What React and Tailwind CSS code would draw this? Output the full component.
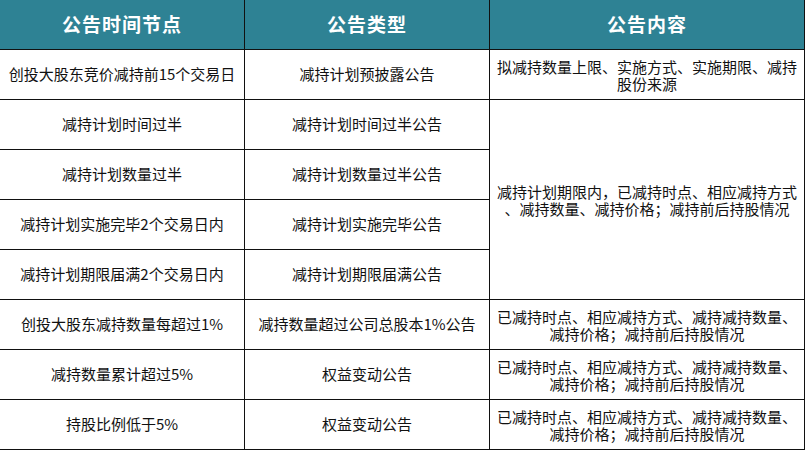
import React from "react";

const rows = [
    ["创投大股东竞价减持前15个交易日", "减持计划预披露公告", ["拟减持数量上限、实施方式、实施期限、减持", "股份来源"]],
    ["减持计划时间过半", "减持计划时间过半公告", null],
    ["减持计划数量过半", "减持计划数量过半公告", null],
    ["减持计划实施完毕2个交易日内", "减持计划实施完毕公告", null],
    ["减持计划期限届满2个交易日内", "减持计划期限届满公告", null],
    ["创投大股东减持数量每超过1%", "减持数量超过公司总股本1%公告", ["已减持时点、相应减持方式、减持减持数量、", "减持价格；减持前后持股情况"]],
    ["减持数量累计超过5%", "权益变动公告", ["已减持时点、相应减持方式、减持减持数量、", "减持价格；减持前后持股情况"]],
    ["持股比例低于5%", "权益变动公告", ["已减持时点、相应减持方式、减持减持数量、", "减持价格；减持前后持股情况"]],
];

const merged = ["减持计划期限内，已减持时点、相应减持方式", "、减持数量、减持价格；减持前后持股情况"];

// explicit breaks so the leading 、 stays where the screenshot has it
function Lines({ lines }) {
    return (
        <p className="leading-[17px] whitespace-nowrap">
            {lines[0]}
            <br />
            {lines[1]}
        </p>
    );
}

export default function App() {
    const cell = "flex items-center justify-center text-center border-r border-b border-[#111]";
    return (
        <div
            className="w-[805px] h-[451px] bg-white text-[#111] text-[15px]"
            style={{ fontFamily: '"Noto Sans CJK SC", sans-serif' }}
        >
            <div className="grid grid-cols-[245px_245px_315px] grid-rows-[50px_repeat(8,50px)]">
                {["公告时间节点", "公告类型", "公告内容"].map((h) => (
                    <div key={h} className={`${cell} bg-[#2e8294] text-white text-[19px] font-bold tracking-[1px]`}>
                        {h}
                    </div>
                ))}
                {rows.map((r, i) => (
                    <React.Fragment key={i}>
                        <div className={cell}>{r[0]}</div>
                        <div className={cell}>{r[1]}</div>
                        {i === 1 && (
                            <div className={`${cell} row-span-4 px-1`}>
                                <Lines lines={merged} />
                            </div>
                        )}
                        {r[2] && (
                            <div className={`${cell} px-1`}>
                                <Lines lines={r[2]} />
                            </div>
                        )}
                    </React.Fragment>
                ))}
            </div>
        </div>
    );
}
